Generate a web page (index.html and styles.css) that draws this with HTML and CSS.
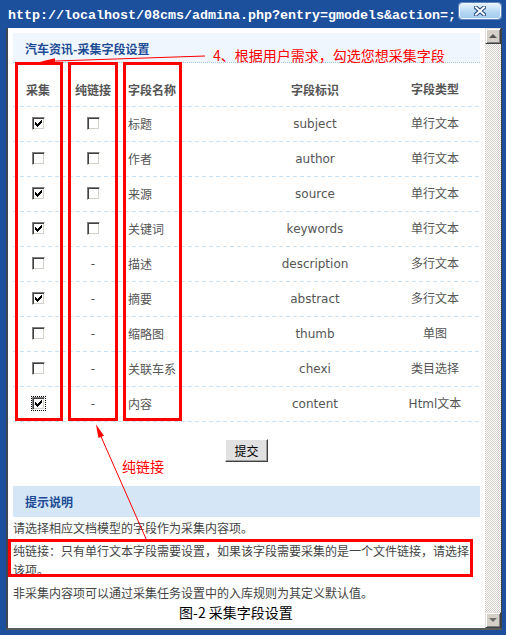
FILE: index.html
```html
<!DOCTYPE html>
<html lang="zh-CN">
<head>
<meta charset="utf-8">
<title>采集字段设置</title>
<link rel="stylesheet" href="styles.css">
</head>
<body>
<div class="window">
  <div class="titlebar">
    <div class="title">http://localhost/08cms/admina.php?entry=gmodels&amp;action=;</div>
    <div class="close">
      <svg width="12" height="10" viewBox="0 0 12 10"><path d="M2 1.5L10 8.5M10 1.5L2 8.5" stroke="#23457f" stroke-width="4" stroke-linecap="square"/><path d="M2 1.5L10 8.5M10 1.5L2 8.5" stroke="#fff" stroke-width="2" stroke-linecap="square"/></svg>
    </div>
  </div>
  <div class="client">
    <div class="content">
      <div class="panel-head">汽车资讯-采集字段设置</div>
      <div class="grid">
        <div class="row head"><span class="c1">采集</span><span class="c2">纯链接</span><span class="c3">字段名称</span><span class="c4">字段标识</span><span class="c5">字段类型</span></div>
        <div class="row"><span class="c1"><span class="cb on"><svg viewBox="0 0 7 7" width="7" height="7"><path d="M6 0h1v1h-1zM5 1h2v1h-2zM0 2h1v1h-1zM4 2h3v1h-3zM0 3h2v1h-2zM3 3h3v1h-3zM0 4h5v1h-5zM1 5h3v1h-3zM2 6h1v1h-1z"/></svg></span></span><span class="c2"><span class="cb"></span></span><span class="c3">标题</span><span class="c4">subject</span><span class="c5">单行文本</span></div>
        <div class="row"><span class="c1"><span class="cb"></span></span><span class="c2"><span class="cb"></span></span><span class="c3">作者</span><span class="c4">author</span><span class="c5">单行文本</span></div>
        <div class="row"><span class="c1"><span class="cb on"><svg viewBox="0 0 7 7" width="7" height="7"><path d="M6 0h1v1h-1zM5 1h2v1h-2zM0 2h1v1h-1zM4 2h3v1h-3zM0 3h2v1h-2zM3 3h3v1h-3zM0 4h5v1h-5zM1 5h3v1h-3zM2 6h1v1h-1z"/></svg></span></span><span class="c2"><span class="cb"></span></span><span class="c3">来源</span><span class="c4">source</span><span class="c5">单行文本</span></div>
        <div class="row"><span class="c1"><span class="cb on"><svg viewBox="0 0 7 7" width="7" height="7"><path d="M6 0h1v1h-1zM5 1h2v1h-2zM0 2h1v1h-1zM4 2h3v1h-3zM0 3h2v1h-2zM3 3h3v1h-3zM0 4h5v1h-5zM1 5h3v1h-3zM2 6h1v1h-1z"/></svg></span></span><span class="c2"><span class="cb"></span></span><span class="c3">关键词</span><span class="c4">keywords</span><span class="c5">单行文本</span></div>
        <div class="row"><span class="c1"><span class="cb"></span></span><span class="c2">-</span><span class="c3">描述</span><span class="c4">description</span><span class="c5">多行文本</span></div>
        <div class="row"><span class="c1"><span class="cb on"><svg viewBox="0 0 7 7" width="7" height="7"><path d="M6 0h1v1h-1zM5 1h2v1h-2zM0 2h1v1h-1zM4 2h3v1h-3zM0 3h2v1h-2zM3 3h3v1h-3zM0 4h5v1h-5zM1 5h3v1h-3zM2 6h1v1h-1z"/></svg></span></span><span class="c2">-</span><span class="c3">摘要</span><span class="c4">abstract</span><span class="c5">多行文本</span></div>
        <div class="row"><span class="c1"><span class="cb"></span></span><span class="c2">-</span><span class="c3">缩略图</span><span class="c4">thumb</span><span class="c5">单图</span></div>
        <div class="row"><span class="c1"><span class="cb"></span></span><span class="c2">-</span><span class="c3">关联车系</span><span class="c4">chexi</span><span class="c5">类目选择</span></div>
        <div class="row"><span class="c1"><span class="cb on focus"><svg viewBox="0 0 7 7" width="7" height="7"><path d="M6 0h1v1h-1zM5 1h2v1h-2zM0 2h1v1h-1zM4 2h3v1h-3zM0 3h2v1h-2zM3 3h3v1h-3zM0 4h5v1h-5zM1 5h3v1h-3zM2 6h1v1h-1z"/></svg></span></span><span class="c2">-</span><span class="c3">内容</span><span class="c4">content</span><span class="c5">Html文本</span></div>
      </div>
      <div class="actions"><button class="btn" type="button">提交</button></div>
      <div class="tips-head">提示说明</div>
      <p class="tip first">请选择相应文档模型的字段作为采集内容项。</p>
      <p class="tip">纯链接：只有单行文本字段需要设置，如果该字段需要采集的是一个文件链接，请选择该项。</p>
      <p class="tip">非采集内容项可以通过采集任务设置中的入库规则为其定义默认值。</p>
      <p class="caption">图-2 采集字段设置</p>
    </div>
    <div class="scrollbar">
      <div class="sb-btn"><span class="tri-up"></span></div>
      <div class="sb-track"></div>
      <div class="sb-btn"><span class="tri-down"></span></div>
    </div>
  </div>
</div>

<svg class="annot" width="506" height="635" viewBox="0 0 506 635">
  <g fill="none" stroke="#ff0000" stroke-width="3">
    <rect x="16.5" y="63.5" width="45" height="356"/>
    <rect x="69.5" y="63.5" width="47" height="356"/>
    <rect x="124.5" y="63.5" width="56" height="356"/>
    <rect x="9.5" y="540.5" width="462" height="35"/>
  </g>
  <g stroke="#ff0000" stroke-width="1" fill="none">
    <line x1="205" y1="56" x2="50" y2="61.2"/>
    <line x1="147" y1="541" x2="99" y2="432"/>
  </g>
  <g fill="#ff0000">
    <polygon points="40,61.8 55,58.2 55,62.4"/>
    <polygon points="96,424.5 104,435.7 98.5,438.1"/>
  </g>
</svg>
<div class="note note1">4、根据用户需求，勾选您想采集字段</div>
<div class="note note2">纯链接</div>
</body>
</html>
```

FILE: styles.css
```css
html, body {
  margin: 0;
  padding: 0;
}

body {
  width: 506px;
  height: 635px;
  position: relative;
  overflow: hidden;
  background: #1c4f9c;
  font-family: "DejaVu Sans", "Noto Sans CJK SC", sans-serif;
  font-size: 12px;
}

.titlebar {
  height: 28px;
  display: flex;
  align-items: flex-start;
}

.title {
  margin: 8px 0 0 8px;
  width: 451px;
  white-space: nowrap;
  font: bold 13.33px/16px "Liberation Mono", monospace;
  color: #fff;
}

.close {
  margin: 3px 0 0 0;
  width: 42px;
  height: 16px;
  box-sizing: border-box;
  border: 1px solid #eef7ff;
  border-radius: 3px;
  background: linear-gradient(#e2f1fd, #b4d6f3 60%, #a3cbee);
  box-shadow: 0 0 0 1px #5f86bf;
  display: flex;
  align-items: center;
  justify-content: center;
}

.close svg {
  display: block;
}

.client {
  display: flex;
  width: 496px;
  height: 602px;
  margin-left: 6px;
  box-sizing: border-box;
  border-left: 2px solid #404754;
  border-bottom: 2px solid #5c5c5c;
  border-right: 1px solid #404040;
  background: #fff;
}

.content {
  flex: 1;
  min-width: 0;
  padding: 5px 5px 0;
  overflow: hidden;
}

.scrollbar {
  width: 16px;
  display: flex;
  flex-direction: column;
}

.sb-btn {
  height: 16px;
  box-sizing: border-box;
  background: #d4d0c8;
  border: 1px solid;
  border-color: #e4e2dc #404040 #404040 #e4e2dc;
  box-shadow: inset 1px 1px #fff, inset -1px -1px #808080;
  display: flex;
  align-items: center;
  justify-content: center;
}

.sb-track {
  flex: 1;
  background: repeating-conic-gradient(#d4d0c8 0 25%, #fff 0 50%) 0 0 / 2px 2px;
}

.tri-up {
  width: 0;
  height: 0;
  border-left: 4px solid transparent;
  border-right: 4px solid transparent;
  border-bottom: 4px solid #555;
  margin-top: -1px;
}

.tri-down {
  width: 0;
  height: 0;
  border-left: 4px solid transparent;
  border-right: 4px solid transparent;
  border-top: 4px solid #6e6e6e;
}

.panel-head {
  height: 27px;
  padding: 2px 0 0 12px;
  border-bottom: 1px dotted #a6c6e6;
  background: #f0f6fd;
  font-family: "Noto Sans CJK SC", sans-serif;
  font-weight: bold;
  color: #1d4c95;
  line-height: 27px;
}

.row {
  display: grid;
  grid-template-columns: 50px 60px 117px 150px 90px;
  align-items: center;
  height: 35px;
  box-sizing: border-box;
  padding-bottom: 1px;
  background: linear-gradient(to right, #c7e1f6 4px, transparent 4px) 0 100% / 7px 1px repeat-x;
  color: #555;
  line-height: 16px;
}

.row.head {
  height: 44px;
  align-items: start;
  padding-top: 18px;
  line-height: 18px;
  font-weight: bold;
  font-family: "Noto Sans CJK SC", sans-serif;
}

.c1, .c2, .c4, .c5 {
  text-align: center;
}

.c3 {
  padding-left: 5px;
  font-family: "Noto Sans CJK SC", sans-serif;
}

.c5 {
  font-family: "DejaVu Sans", "Noto Sans CJK SC", sans-serif;
}

.cb {
  display: inline-block;
  vertical-align: middle;
  width: 13px;
  height: 13px;
  box-sizing: border-box;
  border: 1px solid;
  border-color: #808080 #fff #fff #808080;
  box-shadow: inset 1px 1px #404040, inset -1px -1px #d4d0c8;
  background: #fff;
  padding: 2px;
  margin-bottom: 2px;
}

.cb svg {
  display: block;
  fill: #000;
  shape-rendering: crispEdges;
}

.cb.focus {
  outline: 1px dotted #000;
}

.actions {
  margin-top: 17px;
  height: 23px;
  text-align: center;
}

.btn {
  width: 43px;
  height: 23px;
  margin: 0;
  padding: 0;
  vertical-align: top;
  background: #e1e1e1;
  border: 1px solid;
  border-color: #fff #404040 #404040 #fff;
  box-shadow: inset -1px -1px #a0a0a0;
  font: 12px/21px "Noto Sans CJK SC", sans-serif;
  color: #000;
}

.tips-head {
  margin-top: 24px;
  height: 31px;
  padding-left: 12px;
  background: #d5e6f7;
  font-family: "Noto Sans CJK SC", sans-serif;
  font-weight: bold;
  color: #1d4c95;
  line-height: 32px;
}

.tip {
  margin: 4px 0 0;
  line-height: 19px;
  color: #444;
  font-family: "Noto Sans CJK SC", sans-serif;
}

.tip.first {
  margin-top: 1px;
}

.caption {
  margin: 0;
  padding-right: 21px;
  text-align: center;
  font: 14px/21px "Noto Sans CJK SC", sans-serif;
  color: #000;
}

.annot {
  position: absolute;
  left: 0;
  top: 0;
  pointer-events: none;
}

.note {
  position: absolute;
  white-space: nowrap;
  color: #ff0000;
  font: 14px/16px "Noto Sans CJK SC", sans-serif;
}

.note1 {
  left: 213px;
  top: 47px;
}

.note2 {
  left: 122px;
  top: 458px;
}
```
